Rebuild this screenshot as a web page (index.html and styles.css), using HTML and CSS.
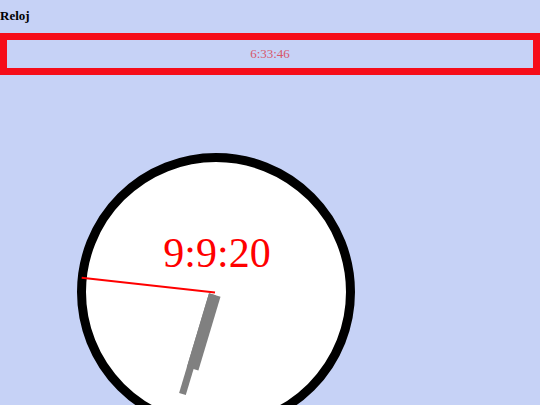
FILE: index.html
```html
<!DOCTYPE html>
<html lang="es">
<head>
<meta charset="utf-8">
<title>Reloj</title>
<link rel="stylesheet" href="styles.css">
</head>
<body>
<h1 class="title">Reloj</h1>
<div class="digital">6:33:46</div>
<svg class="clock" width="278" height="278" viewBox="0 0 278 278">
  <circle cx="139" cy="139" r="134.5" fill="#ffffff" stroke="#000000" stroke-width="9"/>
  <text x="140" y="114" text-anchor="middle" class="clock-text">9:9:20</text>
  <polygon points="132,140.3 143.5,143.7 121.4,217.4 109.9,214" fill="#808080"/>
  <polygon points="132,140.3 138.7,142.3 108.8,241.9 102.1,239.9" fill="#808080"/>
  <line x1="138" y1="139.5" x2="4.7" y2="124.7" stroke="#ff0000" stroke-width="2"/>
</svg>
</body>
</html>
```
FILE: styles.css
```css
html, body {
  margin: 0;
  padding: 0;
}
body {
  background: #c6d2f6;
  font-family: "Liberation Serif", "Times New Roman", serif;
  color: #000;
}
.title {
  margin: 0;
  padding-top: 8px;
  font-size: 13px;
  line-height: 16px;
  font-weight: bold;
}
.digital {
  margin-top: 9px;
  height: 28px;
  border: 7px solid #f50d1a;
  text-align: center;
  font-size: 13px;
  line-height: 28px;
  color: #d8566a;
}
.clock {
  display: block;
  margin-top: 78px;
  margin-left: 77px;
}
.clock-text {
  font-family: "Liberation Serif", "Times New Roman", serif;
  font-size: 42px;
  fill: #ff0000;
}
```
